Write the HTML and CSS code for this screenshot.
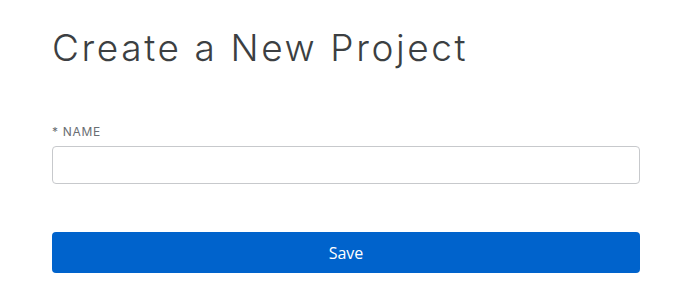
FILE: index.html
```html
<!DOCTYPE html>
<html>
<head>
<meta charset="utf-8">
<link rel="stylesheet" href="styles.css">
</head>
<body>
<div class="page">
  <h1 class="title">Create a New Project</h1>
  <form class="form">
    <label class="label" for="name">* NAME</label>
    <input class="input" id="name" type="text">
    <button class="save" type="button">Save</button>
  </form>
</div>
</body>
</html>
```
FILE: styles.css
```css
html, body { margin: 0; padding: 0; background: #fff; }
body { font-family: Inter, "Open Sans", "Liberation Sans", sans-serif; }
.page { padding: 24px 0 0 52px; width: 588px; }
.title {
  margin: 0;
  font-weight: 300;
  font-size: 37px;
  line-height: 48px;
  color: #3c3f42;
  letter-spacing: 2.6px;
}
.form { display: flex; flex-direction: column; margin-top: 52px; }
.label {
  font-size: 12px;
  line-height: 16px;
  color: #6a6e73;
  letter-spacing: 0.7px;
}
.input {
  margin-top: 6px;
  height: 38px;
  box-sizing: border-box;
  border: 1px solid #c7c9cc;
  border-radius: 4px;
  padding: 0 10px;
  font: inherit;
}
.save {
  margin-top: 48px;
  height: 41px;
  border: 0;
  border-radius: 4px;
  background: #0063cc;
  color: #fff;
  font-family: "Open Sans", sans-serif;
  font-size: 16px;
}
```
